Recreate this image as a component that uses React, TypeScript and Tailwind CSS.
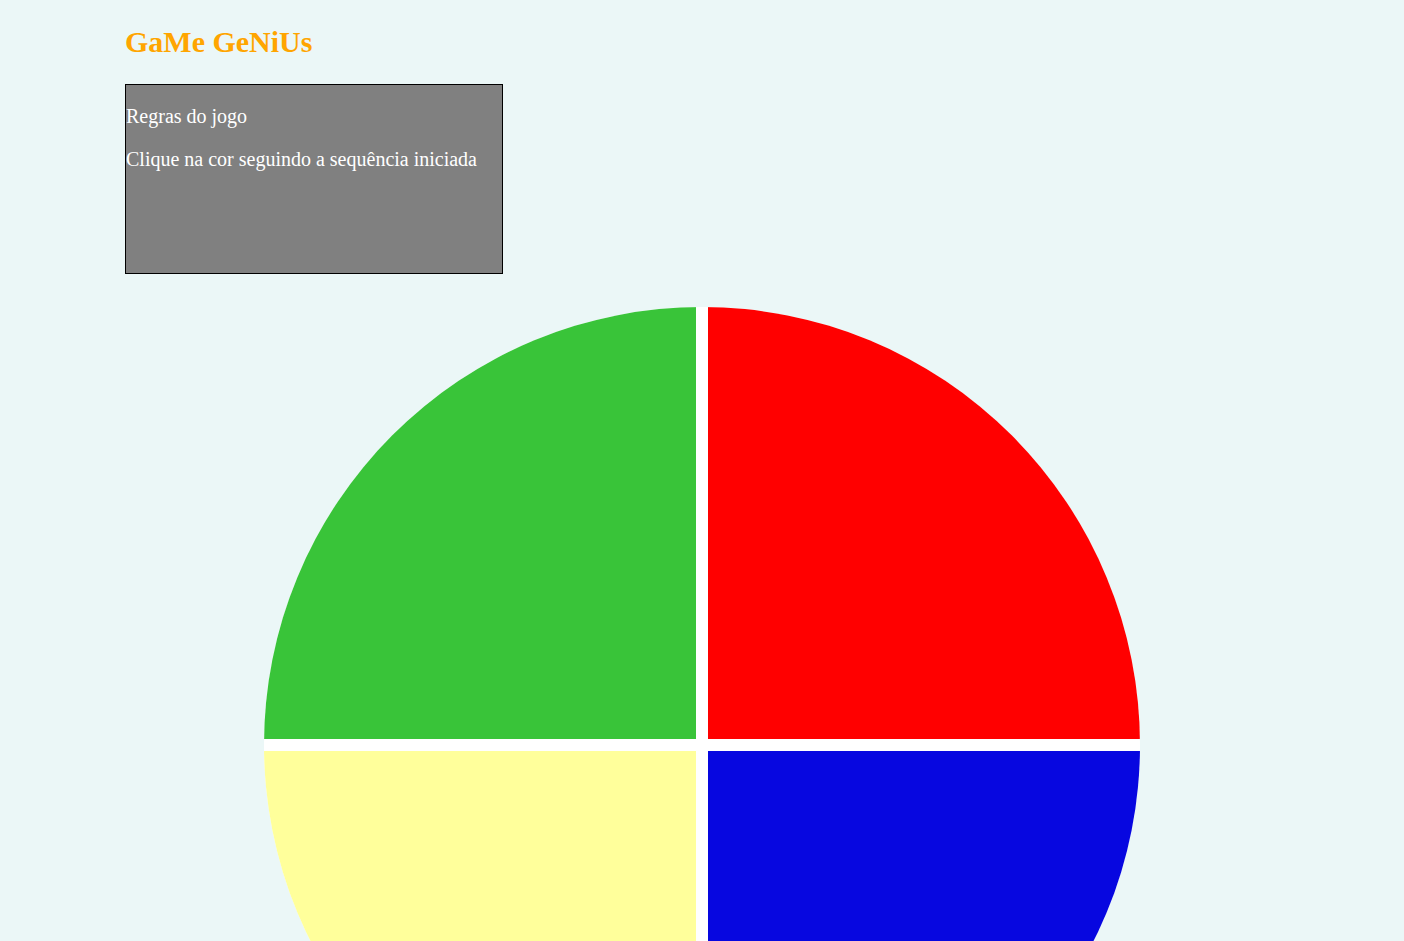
export default function App() {
  return (
    <div className="min-h-screen bg-[#ebf7f7] font-['Liberation_Serif',serif]">
      <div className="px-[125px] pt-[25px]">
        <h1 className="text-[30px] font-bold leading-[34px] text-[#ffa500]">GaMe GeNiUs</h1>
        <div className="mt-[25px] h-[190px] w-[378px] border border-black bg-[#808080] text-[20px] leading-[23px] text-white">
          <p className="mt-5">Regras do jogo</p>
          <p className="mt-5">Clique na cor seguindo a sequência iniciada</p>
        </div>
      </div>
      <div className="mt-[33px] flex justify-center">
        <div className="grid h-[876px] w-[876px] grid-cols-2 grid-rows-2 gap-3 overflow-hidden rounded-full bg-white">
          <div className="bg-[#39c439]" />
          <div className="bg-[#ff0000]" />
          <div className="bg-[#ffff9b]" />
          <div className="bg-[#0707e0]" />
        </div>
      </div>
    </div>
  );
}
